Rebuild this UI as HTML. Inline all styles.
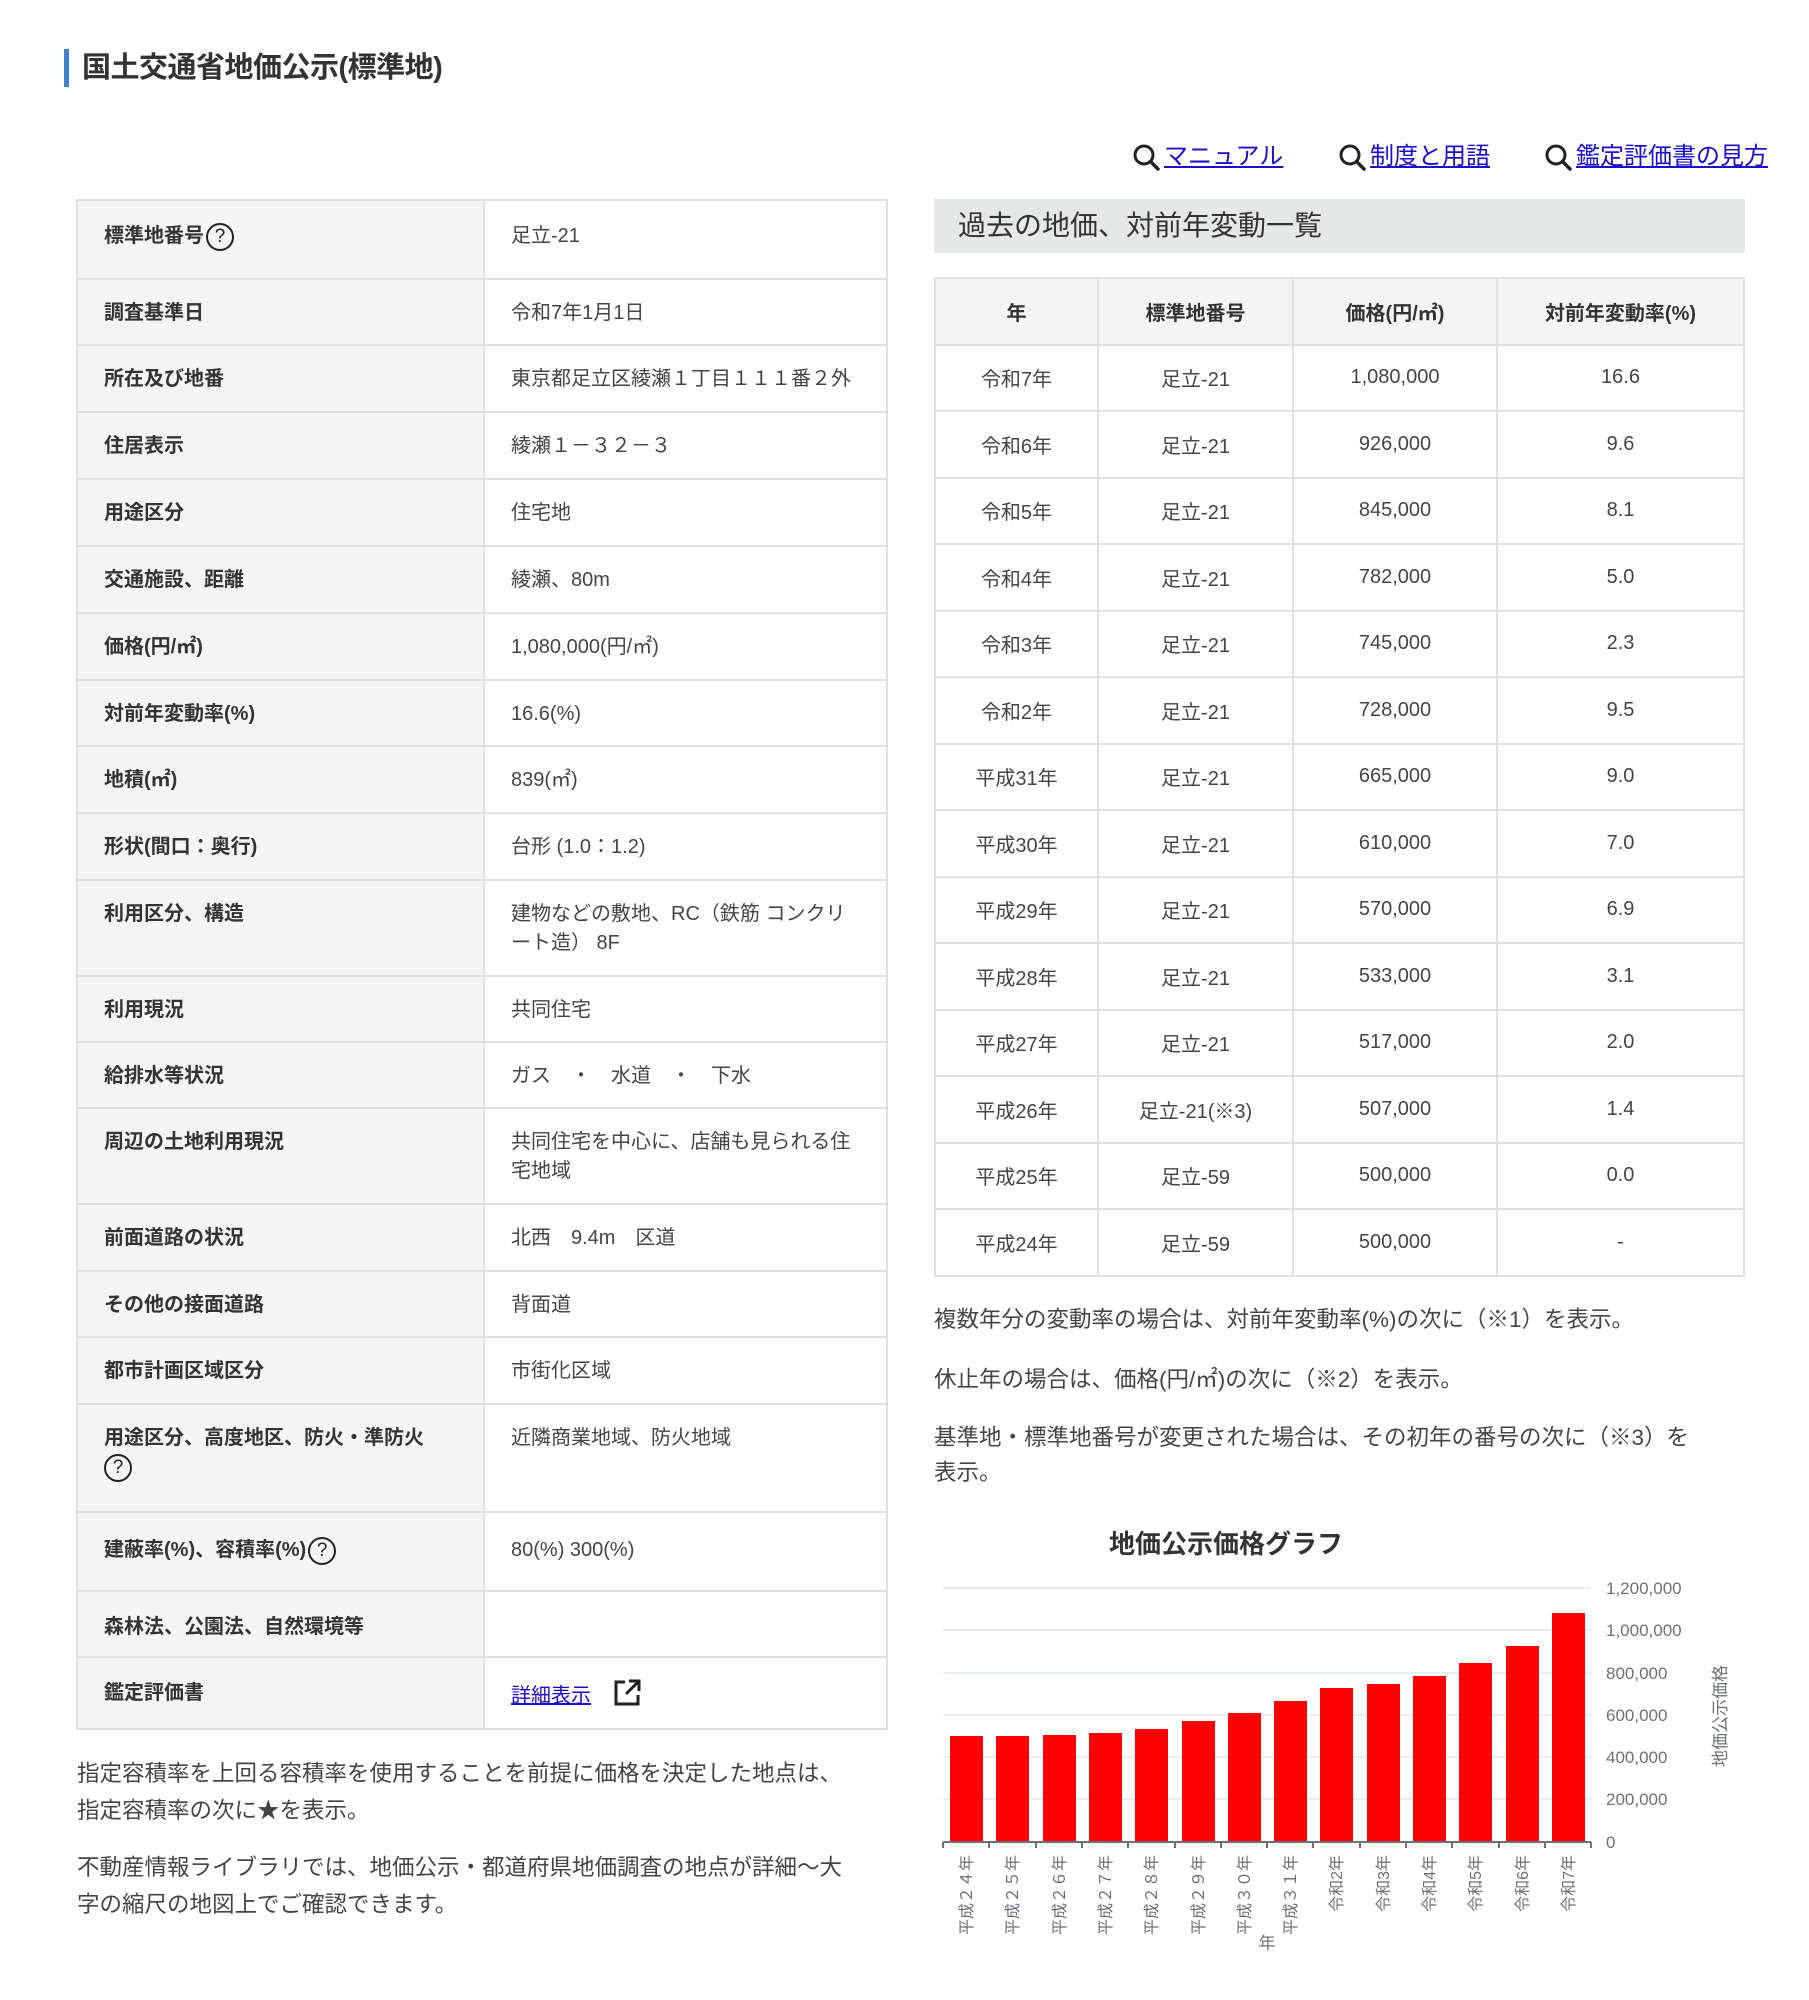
<!DOCTYPE html>
<html><head><meta charset="utf-8">
<style>
*{margin:0;padding:0;box-sizing:border-box}
body{width:1809px;height:2000px;position:relative;background:#fff;font-family:"Liberation Sans","Noto Sans CJK JP",sans-serif;color:#333;overflow:hidden}
.abs{position:absolute}
h1{position:absolute;left:64px;top:49px;height:38px;border-left:5px solid #3b82c8;padding-left:13px;font-size:29px;line-height:38px;font-weight:bold;color:#333;letter-spacing:-0.5px}
.lk{position:absolute;top:141px;font-size:24px;line-height:32px;color:#1a0dcc;text-decoration:underline;white-space:nowrap}
.lk svg{position:absolute;left:-32px;top:2px}
table{border-collapse:collapse;position:absolute}
#lt{left:76px;top:199px;width:812px}
#lt td{border:2px solid #e0e0e0;font-size:20px;line-height:29px;vertical-align:top;padding:19px 24px 0 26px}
#lt td.l{background:#f4f4f4;font-weight:bold;width:407px;color:#333}
#lt td.v{color:#444}
.q{display:inline-block;width:28px;height:28px;border:2px solid #222;border-radius:50%;font-size:19px;line-height:24px;text-align:center;font-weight:normal;vertical-align:middle;margin-left:2px;color:#222}
#rt{left:934px;top:277px;width:811px}
#rt td,#rt th{border:2px solid #e0e0e0;font-size:20px;text-align:center;height:66.5px;color:#444;font-weight:normal}
#rt th{background:#f4f4f4;font-weight:bold;color:#333}
.note{position:absolute;font-size:22.5px;line-height:35px;color:#444}
</style></head><body>
<h1>国土交通省地価公示(標準地)</h1>

<div class="lk" style="left:1164px"><svg width="30" height="30" viewBox="0 0 30 30"><circle cx="12" cy="12" r="9" fill="none" stroke="#222" stroke-width="3"/><line x1="18.5" y1="18.5" x2="26" y2="26" stroke="#222" stroke-width="3.5" stroke-linecap="round"/></svg>マニュアル</div>
<div class="lk" style="left:1370px"><svg width="30" height="30" viewBox="0 0 30 30"><circle cx="12" cy="12" r="9" fill="none" stroke="#222" stroke-width="3"/><line x1="18.5" y1="18.5" x2="26" y2="26" stroke="#222" stroke-width="3.5" stroke-linecap="round"/></svg>制度と用語</div>
<div class="lk" style="left:1576px"><svg width="30" height="30" viewBox="0 0 30 30"><circle cx="12" cy="12" r="9" fill="none" stroke="#222" stroke-width="3"/><line x1="18.5" y1="18.5" x2="26" y2="26" stroke="#222" stroke-width="3.5" stroke-linecap="round"/></svg>鑑定評価書の見方</div>

<table id="lt">
<tr style="height:79px"><td class="l" style="padding-top:21px">標準地番号<span class="q">?</span></td><td class="v" style="padding-top:21px">足立-21</td></tr>
<tr style="height:66px"><td class="l">調査基準日</td><td class="v">令和7年1月1日</td></tr>
<tr style="height:67px"><td class="l">所在及び地番</td><td class="v">東京都足立区綾瀬１丁目１１１番２外</td></tr>
<tr style="height:67px"><td class="l">住居表示</td><td class="v">綾瀬１－３２－３</td></tr>
<tr style="height:67px"><td class="l">用途区分</td><td class="v">住宅地</td></tr>
<tr style="height:67px"><td class="l">交通施設、距離</td><td class="v">綾瀬、80m</td></tr>
<tr style="height:67px"><td class="l">価格(円/㎡)</td><td class="v">1,080,000(円/㎡)</td></tr>
<tr style="height:66px"><td class="l">対前年変動率(%)</td><td class="v">16.6(%)</td></tr>
<tr style="height:67px"><td class="l">地積(㎡)</td><td class="v">839(㎡)</td></tr>
<tr style="height:67px"><td class="l">形状(間口：奥行)</td><td class="v">台形 (1.0：1.2)</td></tr>
<tr style="height:96px"><td class="l">利用区分、構造</td><td class="v">建物などの敷地、RC（鉄筋 コンクリ<br>ート造） 8F</td></tr>
<tr style="height:66px"><td class="l">利用現況</td><td class="v">共同住宅</td></tr>
<tr style="height:66px"><td class="l">給排水等状況</td><td class="v">ガス　・　水道　・　下水</td></tr>
<tr style="height:96px"><td class="l">周辺の土地利用現況</td><td class="v">共同住宅を中心に、店舗も見られる住<br>宅地域</td></tr>
<tr style="height:67px"><td class="l">前面道路の状況</td><td class="v">北西　9.4m　区道</td></tr>
<tr style="height:66px"><td class="l">その他の接面道路</td><td class="v">背面道</td></tr>
<tr style="height:67px"><td class="l">都市計画区域区分</td><td class="v">市街化区域</td></tr>
<tr style="height:108px"><td class="l">用途区分、高度地区、防火・準防火<br><span class="q" style="margin:0">?</span></td><td class="v">近隣商業地域、防火地域</td></tr>
<tr style="height:79px"><td class="l" style="padding-top:23px">建蔽率(%)、容積率(%)<span class="q">?</span></td><td class="v" style="padding-top:23px">80(%) 300(%)</td></tr>
<tr style="height:66px"><td class="l" style="padding-top:21px">森林法、公園法、自然環境等</td><td class="v"></td></tr>
<tr style="height:72px"><td class="l" style="padding-top:21px">鑑定評価書</td><td class="v" style="padding-top:21px"><span style="color:#1a0dcc;text-decoration:underline">詳細表示</span><svg style="margin-left:22px;vertical-align:-5px" width="28" height="28" viewBox="0 0 28 28"><path d="M12 3H3v22h22v-9" fill="none" stroke="#222" stroke-width="3"/><path d="M16 2h10v10M26 2L13 15" fill="none" stroke="#222" stroke-width="3"/></svg></td></tr>
</table>

<div class="note" style="left:77px;top:1755px;width:830px;line-height:37px">指定容積率を上回る容積率を使用することを前提に価格を決定した地点は、<br>指定容積率の次に★を表示。</div>
<div class="note" style="left:77px;top:1849px;width:830px;line-height:37px">不動産情報ライブラリでは、地価公示・都道府県地価調査の地点が詳細～大<br>字の縮尺の地図上でご確認できます。</div>

<div class="abs" style="left:934px;top:199px;width:811px;height:54px;background:#e6e7e7;font-size:28px;line-height:54px;padding-left:24px;color:#333">過去の地価、対前年変動一覧</div>

<table id="rt">
<tr><th style="width:163px">年</th><th style="width:195px">標準地番号</th><th style="width:204px">価格(円/㎡)</th><th>対前年変動率(%)</th></tr>
<tr><td>令和7年</td><td>足立-21</td><td>1,080,000</td><td>16.6</td></tr>
<tr><td>令和6年</td><td>足立-21</td><td>926,000</td><td>9.6</td></tr>
<tr><td>令和5年</td><td>足立-21</td><td>845,000</td><td>8.1</td></tr>
<tr><td>令和4年</td><td>足立-21</td><td>782,000</td><td>5.0</td></tr>
<tr><td>令和3年</td><td>足立-21</td><td>745,000</td><td>2.3</td></tr>
<tr><td>令和2年</td><td>足立-21</td><td>728,000</td><td>9.5</td></tr>
<tr><td>平成31年</td><td>足立-21</td><td>665,000</td><td>9.0</td></tr>
<tr><td>平成30年</td><td>足立-21</td><td>610,000</td><td>7.0</td></tr>
<tr><td>平成29年</td><td>足立-21</td><td>570,000</td><td>6.9</td></tr>
<tr><td>平成28年</td><td>足立-21</td><td>533,000</td><td>3.1</td></tr>
<tr><td>平成27年</td><td>足立-21</td><td>517,000</td><td>2.0</td></tr>
<tr><td>平成26年</td><td>足立-21(※3)</td><td>507,000</td><td>1.4</td></tr>
<tr><td>平成25年</td><td>足立-59</td><td>500,000</td><td>0.0</td></tr>
<tr><td>平成24年</td><td>足立-59</td><td>500,000</td><td>-</td></tr>
</table>

<div class="note" style="left:934px;top:1302px">複数年分の変動率の場合は、対前年変動率(%)の次に（※1）を表示。</div>
<div class="note" style="left:934px;top:1362px">休止年の場合は、価格(円/㎡)の次に（※2）を表示。</div>
<div class="note" style="left:934px;top:1420px;width:830px">基準地・標準地番号が変更された場合は、その初年の番号の次に（※3）を<br>表示。</div>

<svg class="abs" style="left:-6px;top:-9px" width="1809" height="2000" viewBox="0 0 1809 2000" font-family="Liberation Sans, Noto Sans CJK JP, sans-serif">
<text x="1232" y="1562" font-size="26" font-weight="bold" fill="#333" text-anchor="middle">地価公示価格グラフ</text>
<g stroke="#e8ecf4" stroke-width="2">
<line x1="949" y1="1597" x2="1597" y2="1597"/><line x1="949" y1="1639" x2="1597" y2="1639"/><line x1="949" y1="1682" x2="1597" y2="1682"/><line x1="949" y1="1724" x2="1597" y2="1724"/><line x1="949" y1="1766" x2="1597" y2="1766"/><line x1="949" y1="1808" x2="1597" y2="1808"/>
</g>
<g fill="#6e7079" font-size="17">
<text x="1612" y="1603">1,200,000</text><text x="1612" y="1645">1,000,000</text><text x="1612" y="1688">800,000</text><text x="1612" y="1730">600,000</text><text x="1612" y="1772">400,000</text><text x="1612" y="1814">200,000</text><text x="1612" y="1857">0</text>
<text transform="translate(1732,1725) rotate(-90)" text-anchor="middle">地価公示価格</text>
<text x="1273" y="1958" text-anchor="middle">年</text>
</g>
<g fill="#ff0000">
<rect x="956" y="1745" width="33" height="106"/>
<rect x="1002" y="1745" width="33" height="106"/>
<rect x="1049" y="1744" width="33" height="107"/>
<rect x="1095" y="1742" width="33" height="109"/>
<rect x="1141" y="1738" width="33" height="113"/>
<rect x="1188" y="1730" width="33" height="121"/>
<rect x="1234" y="1722" width="33" height="129"/>
<rect x="1280" y="1710" width="33" height="141"/>
<rect x="1326" y="1697" width="33" height="154"/>
<rect x="1373" y="1693" width="33" height="158"/>
<rect x="1419" y="1685" width="33" height="166"/>
<rect x="1465" y="1672" width="33" height="179"/>
<rect x="1512" y="1655" width="33" height="196"/>
<rect x="1558" y="1622" width="33" height="229"/>
</g>
<g stroke="#6e7079" stroke-width="2">
<line x1="949" y1="1851" x2="1597" y2="1851"/>
<line x1="949" y1="1851" x2="949" y2="1857"/><line x1="995" y1="1851" x2="995" y2="1857"/><line x1="1042" y1="1851" x2="1042" y2="1857"/><line x1="1088" y1="1851" x2="1088" y2="1857"/><line x1="1134" y1="1851" x2="1134" y2="1857"/><line x1="1181" y1="1851" x2="1181" y2="1857"/><line x1="1227" y1="1851" x2="1227" y2="1857"/><line x1="1273" y1="1851" x2="1273" y2="1857"/><line x1="1319" y1="1851" x2="1319" y2="1857"/><line x1="1366" y1="1851" x2="1366" y2="1857"/><line x1="1412" y1="1851" x2="1412" y2="1857"/><line x1="1458" y1="1851" x2="1458" y2="1857"/><line x1="1505" y1="1851" x2="1505" y2="1857"/><line x1="1551" y1="1851" x2="1551" y2="1857"/><line x1="1597" y1="1851" x2="1597" y2="1857"/>
</g>
<g fill="#6e7079" font-size="16" text-anchor="end">
<text transform="translate(978,1864) rotate(-90)">平成２４年</text>
<text transform="translate(1024,1864) rotate(-90)">平成２５年</text>
<text transform="translate(1071,1864) rotate(-90)">平成２６年</text>
<text transform="translate(1117,1864) rotate(-90)">平成２７年</text>
<text transform="translate(1163,1864) rotate(-90)">平成２８年</text>
<text transform="translate(1210,1864) rotate(-90)">平成２９年</text>
<text transform="translate(1256,1864) rotate(-90)">平成３０年</text>
<text transform="translate(1302,1864) rotate(-90)">平成３１年</text>
<text transform="translate(1348,1864) rotate(-90)">令和2年</text>
<text transform="translate(1395,1864) rotate(-90)">令和3年</text>
<text transform="translate(1441,1864) rotate(-90)">令和4年</text>
<text transform="translate(1487,1864) rotate(-90)">令和5年</text>
<text transform="translate(1534,1864) rotate(-90)">令和6年</text>
<text transform="translate(1580,1864) rotate(-90)">令和7年</text>
</g>
</svg>
</body></html>
